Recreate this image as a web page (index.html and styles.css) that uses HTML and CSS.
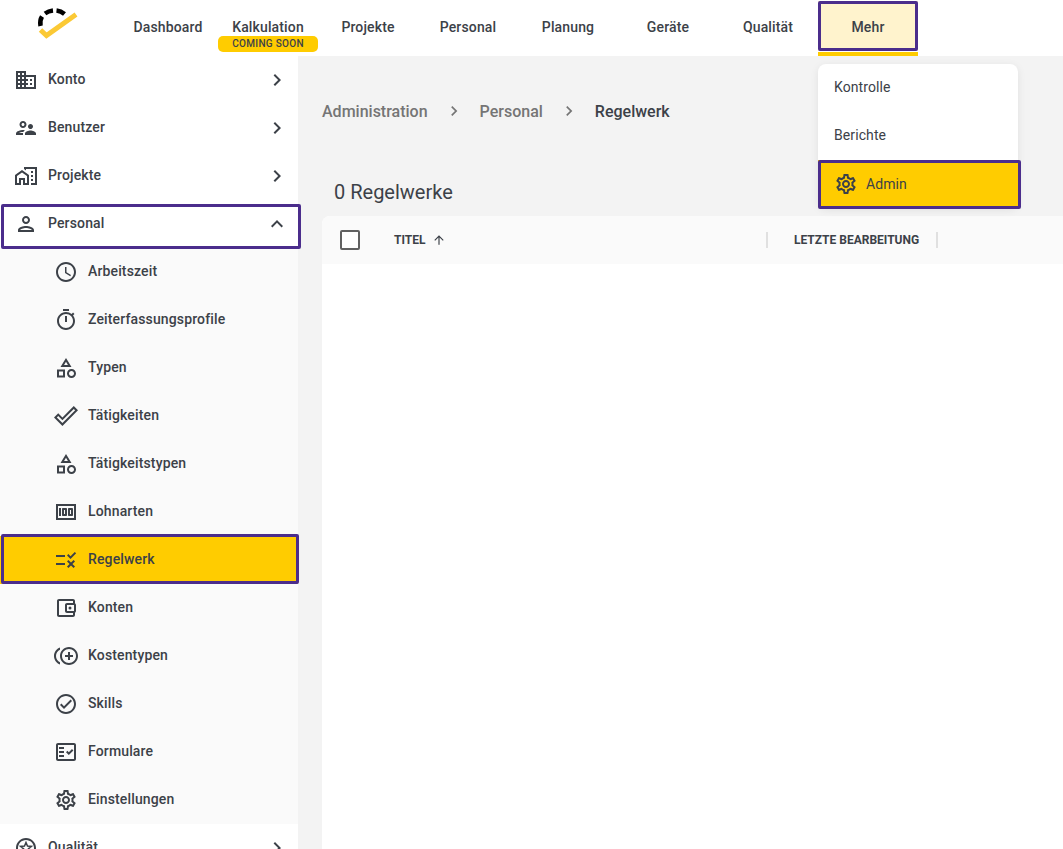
FILE: index.html
```html
<html lang="de">
<head>
    <meta charset="utf-8">
    <title>Regelwerk</title>
    <link rel="stylesheet" href="styles.css">
</head>
<body>
    <svg class="icon-defs" width="0" height="0">
        <symbol id="i-right" viewBox="0 0 24 24"><path d="M10 6L8.59 7.41 13.17 12l-4.58 4.59L10 18l6-6z"/></symbol>
        <symbol id="i-up" viewBox="0 0 24 24"><path d="M12 8l-6 6 1.41 1.41L12 10.83l4.59 4.58L18 14z"/></symbol>
        <symbol id="i-category" viewBox="0 0 24 24"><path d="M12 2l-5.5 9h11L12 2zm0 3.84L13.93 9h-3.87L12 5.84zM17.5 13c-2.49 0-4.5 2.01-4.5 4.5s2.01 4.5 4.5 4.5 4.5-2.01 4.5-4.5-2.01-4.5-4.5-4.5zm0 7c-1.38 0-2.5-1.12-2.5-2.5s1.12-2.5 2.5-2.5 2.5 1.12 2.5 2.5-1.12 2.5-2.5 2.5zM3 21.5h8v-8H3v8zm2-6h4v4H5v-4z"/></symbol>
        <symbol id="i-settings" viewBox="0 0 24 24"><path d="M19.43 12.98c.04-.32.07-.64.07-.98 0-.34-.03-.66-.07-.98l2.11-1.65c.19-.15.24-.42.12-.64l-2-3.46c-.09-.16-.26-.25-.44-.25-.06 0-.12.01-.17.03l-2.49 1c-.52-.4-1.08-.73-1.69-.98l-.38-2.65C14.46 2.18 14.25 2 14 2h-4c-.25 0-.46.18-.49.42l-.38 2.65c-.61.25-1.17.59-1.69.98l-2.49-1c-.06-.02-.12-.03-.18-.03-.17 0-.34.09-.43.25l-2 3.46c-.13.22-.07.49.12.64l2.11 1.65c-.04.32-.07.65-.07.98 0 .33.03.66.07.98l-2.11 1.65c-.19.15-.24.42-.12.64l2 3.46c.09.16.26.25.44.25.06 0 .12-.01.17-.03l2.49-1c.52.4 1.08.73 1.69.98l.38 2.65c.03.24.24.42.49.42h4c.25 0 .46-.18.49-.42l.38-2.65c.61-.25 1.17-.59 1.69-.98l2.49 1c.06.02.12.03.18.03.17 0 .34-.09.43-.25l2-3.46c.12-.22.07-.49-.12-.64l-2.11-1.65zm-1.98-1.71c.04.31.05.52.05.73 0 .21-.02.43-.05.73l-.14 1.13.89.7 1.08.84-.7 1.21-1.27-.51-1.04-.42-.9.68c-.43.32-.84.56-1.25.73l-1.06.43-.16 1.13-.2 1.35h-1.4l-.19-1.35-.16-1.13-1.06-.43c-.43-.18-.83-.41-1.23-.71l-.91-.7-1.06.43-1.27.51-.7-1.21 1.08-.84.89-.7-.14-1.13c-.03-.31-.05-.54-.05-.74s.02-.43.05-.73l.14-1.13-.89-.7-1.08-.84.7-1.21 1.27.51 1.04.42.9-.68c.43-.32.84-.56 1.25-.73l1.06-.43.16-1.13.2-1.35h1.39l.19 1.35.16 1.13 1.06.43c.43.18.83.41 1.23.71l.91.7 1.06-.43 1.27-.51.7 1.21-1.07.85-.89.7.14 1.13zM12 8c-2.21 0-4 1.79-4 4s1.79 4 4 4 4-1.79 4-4-1.79-4-4-4zm0 6c-1.1 0-2-.9-2-2s.9-2 2-2 2 .9 2 2-.9 2-2 2z"/></symbol>
    </svg>

    <div class="app">
        <header class="topbar">
            <div class="logo">
                <svg width="118" height="56" viewBox="0 0 118 56">
                    <path class="logo-arc" d="M40.500 26Q39.500 20.500 42 16.500M45 13.500Q48.500 11 53 10.500M56.500 10.500Q61 11 64.500 14"/>
                    <path class="logo-check" d="M40.500 30L46.500 35.500L76 14.500"/>
                </svg>
            </div>
            <nav class="nav">
                <a class="nav-item">Dashboard</a>
                <a class="nav-item">Kalkulation<span class="soon">COMING SOON</span></a>
                <a class="nav-item">Projekte</a>
                <a class="nav-item">Personal</a>
                <a class="nav-item">Planung</a>
                <a class="nav-item">Geräte</a>
                <a class="nav-item">Qualität</a>
                <a class="nav-item nav-more">Mehr</a>
            </nav>
        </header>

        <div class="body">
            <aside class="sidebar">
                <a class="side-row">
                    <svg class="icon" viewBox="0 0 24 24"><path d="M12 7V3H2v18h20V7H12zM6 19H4v-2h2v2zm0-4H4v-2h2v2zm0-4H4V9h2v2zm0-4H4V5h2v2zm4 12H8v-2h2v2zm0-4H8v-2h2v2zm0-4H8V9h2v2zm0-4H8V5h2v2zm10 12h-8v-2h2v-2h-2v-2h2v-2h-2V9h8v10zm-2-8h-2v2h2v-2zm0 4h-2v2h2v-2z"/></svg>
                    <span class="side-label">Konto</span>
                    <svg class="icon"><use href="#i-right"/></svg>
                </a>
                <a class="side-row">
                    <svg class="icon" viewBox="0 0 24 24"><path d="M9 12c1.930 0 3.500-1.570 3.500-3.500S10.930 5 9 5 5.500 6.570 5.500 8.500 7.070 12 9 12zm0-5c.83 0 1.500.67 1.500 1.500S9.830 10 9 10s-1.500-.67-1.500-1.500S8.170 7 9 7zm.05 10H4.770c.99-.5 2.700-1 4.230-1 .11 0 .23.01.34.01.34-.73.93-1.330 1.640-1.810-.73-.13-1.420-.2-1.980-.2-2.340 0-7 1.170-7 3.500V19h7v-1.500c0-.17.02-.34.05-.5zm7.450-2.500c-1.840 0-5.500 1.010-5.500 3V19h11v-1.500c0-1.990-3.660-3-5.500-3zm1.210-1.820c.76-.43 1.290-1.240 1.290-2.180C19 9.120 17.880 8 16.500 8S14 9.120 14 10.500c0 .94.53 1.750 1.290 2.180.36.2.77.32 1.210.32s.85-.12 1.210-.32z"/></svg>
                    <span class="side-label">Benutzer</span>
                    <svg class="icon"><use href="#i-right"/></svg>
                </a>
                <a class="side-row">
                    <svg class="icon" viewBox="0 0 24 24"><path d="M1 11v10h6v-5h2v5h6V11L8 6l-7 5zm12 8h-2v-5H5v5H3v-7l5-3.500 5 3.500v7zm4-12h2v2h-2zm0 4h2v2h-2zm0 4h2v2h-2zM10 3v1.970l2 1.430V5h9v14h-4v2h6V3z"/></svg>
                    <span class="side-label">Projekte</span>
                    <svg class="icon"><use href="#i-right"/></svg>
                </a>
                <a class="side-row marked marked-personal">
                    <svg class="icon" viewBox="0 0 24 24"><path d="M12 6c1.100 0 2 .9 2 2s-.9 2-2 2-2-.9-2-2 .9-2 2-2m0 10c2.700 0 5.800 1.290 6 2H6c.23-.72 3.310-2 6-2m0-12C9.790 4 8 5.790 8 8s1.790 4 4 4 4-1.790 4-4-1.790-4-4-4zm0 10c-2.670 0-8 1.340-8 4v2h16v-2c0-2.660-5.330-4-8-4z"/></svg>
                    <span class="side-label">Personal</span>
                    <svg class="icon"><use href="#i-up"/></svg>
                </a>

                <div class="submenu">
                    <a class="sub-row">
                        <svg class="icon" viewBox="0 0 24 24"><path d="M11.990 2C6.470 2 2 6.480 2 12s4.470 10 9.990 10C17.520 22 22 17.520 22 12S17.520 2 11.990 2zM12 20c-4.420 0-8-3.580-8-8s3.580-8 8-8 8 3.580 8 8-3.580 8-8 8zm.5-13H11v6l5.250 3.150.75-1.230-4.500-2.670z"/></svg>
                        <span class="side-label">Arbeitszeit</span>
                    </a>
                    <a class="sub-row">
                        <svg class="icon" viewBox="0 0 24 24"><path d="M15 1H9v2h6V1zm-4 13h2V8h-2v6zm8.030-6.610l1.420-1.420c-.43-.51-.9-.99-1.410-1.410l-1.420 1.420C16.070 4.740 14.120 4 12 4c-4.970 0-9 4.030-9 9s4.020 9 9 9 9-4.030 9-9c0-2.120-.74-4.070-1.970-5.610zM12 20c-3.870 0-7-3.130-7-7s3.130-7 7-7 7 3.130 7 7-3.130 7-7 7z"/></svg>
                        <span class="side-label">Zeiterfassungsprofile</span>
                    </a>
                    <a class="sub-row">
                        <svg class="icon"><use href="#i-category"/></svg>
                        <span class="side-label">Typen</span>
                    </a>
                    <a class="sub-row">
                        <svg class="icon" viewBox="0 0 24 24"><path d="M19.770 4.930l1.400 1.400L8.430 19.070l-5.600-5.600 1.400-1.400 4.200 4.200L19.770 4.930m0-2.830L8.430 13.440l-4.200-4.200L0 13.470l8.430 8.430L24 6.330 19.770 2.100z"/></svg>
                        <span class="side-label">Tätigkeiten</span>
                    </a>
                    <a class="sub-row">
                        <svg class="icon"><use href="#i-category"/></svg>
                        <span class="side-label">Tätigkeitstypen</span>
                    </a>
                    <a class="sub-row">
                        <svg class="icon" viewBox="0 0 24 24"><path d="M5 8h2v8H5zm7 0H9c-.55 0-1 .45-1 1v6c0 .55.45 1 1 1h3c.55 0 1-.45 1-1V9c0-.55-.45-1-1-1zm-1 6h-1v-4h1v4zm7-6h-3c-.55 0-1 .45-1 1v6c0 .55.45 1 1 1h3c.55 0 1-.45 1-1V9c0-.55-.45-1-1-1zm-1 6h-1v-4h1v4zM2 4v16h20V4H2zm2 14V6h16v12H4z"/></svg>
                        <span class="side-label">Lohnarten</span>
                    </a>
                    <a class="sub-row sub-active marked marked-regelwerk">
                        <svg class="icon" viewBox="0 0 24 24"><path d="M16.540 11L13 7.460l1.410-1.410 2.120 2.120 4.240-4.240 1.410 1.410L16.540 11zM11 7H2v2h9V7zm10 6.410L19.590 12 17 14.590 14.410 12 13 13.410 15.590 16 13 18.590 14.410 20 17 17.410 19.590 20 21 18.590 18.410 16 21 13.410zM11 15H2v2h9v-2z"/></svg>
                        <span class="side-label">Regelwerk</span>
                    </a>
                    <a class="sub-row">
                        <svg class="icon" viewBox="0 0 24 24"><path d="M21 7.280V5c0-1.100-.9-2-2-2H5c-1.110 0-2 .9-2 2v14c0 1.100.89 2 2 2h14c1.100 0 2-.9 2-2v-2.280c.59-.35 1-.98 1-1.720V9c0-.74-.41-1.370-1-1.720zM20 9v6h-7V9h7zM5 19V5h14v2h-6c-1.100 0-2 .9-2 2v6c0 1.100.9 2 2 2h6v2H5z"/><circle cx="16" cy="12" r="1.500"/></svg>
                        <span class="side-label">Konten</span>
                    </a>
                    <a class="sub-row">
                        <svg class="icon" viewBox="0 0 24 24"><path d="M16 8h-2v3h-3v2h3v3h2v-3h3v-2h-3zM2 12c0-2.790 1.640-5.200 4.010-6.320V3.520C2.520 4.760 0 8.090 0 12s2.520 7.240 6.010 8.480v-2.160C3.640 17.200 2 14.790 2 12zm13-9c-4.960 0-9 4.040-9 9s4.040 9 9 9 9-4.040 9-9-4.040-9-9-9zm0 16c-3.860 0-7-3.140-7-7s3.140-7 7-7 7 3.140 7 7-3.140 7-7 7z"/></svg>
                        <span class="side-label">Kostentypen</span>
                    </a>
                    <a class="sub-row">
                        <svg class="icon" viewBox="0 0 24 24"><path d="M12 2C6.480 2 2 6.480 2 12s4.480 10 10 10 10-4.480 10-10S17.520 2 12 2zm0 18c-4.410 0-8-3.590-8-8s3.590-8 8-8 8 3.590 8 8-3.590 8-8 8zm4.590-12.420L10 14.170l-2.590-2.580L6 13l4 4 8-8z"/></svg>
                        <span class="side-label">Skills</span>
                    </a>
                    <a class="sub-row">
                        <svg class="icon" viewBox="0 0 24 24"><path d="M20 3H4c-1.100 0-2 .9-2 2v14c0 1.100.9 2 2 2h16c1.100 0 2-.9 2-2V5c0-1.100-.9-2-2-2zm0 16H4V5h16v14zM19.410 10.420l-1.420-1.420-3.170 3.170-1.410-1.420L12 12.160 14.820 15zM5 7h5v2H5zm0 4h5v2H5zm0 4h5v2H5z"/></svg>
                        <span class="side-label">Formulare</span>
                    </a>
                    <a class="sub-row">
                        <svg class="icon"><use href="#i-settings"/></svg>
                        <span class="side-label">Einstellungen</span>
                    </a>
                </div>

                <a class="side-row">
                    <svg class="icon" viewBox="0 0 24 24"><path d="M12 2C6.480 2 2 6.480 2 12s4.480 10 10 10 10-4.480 10-10S17.520 2 12 2zm0 18c-4.410 0-8-3.590-8-8s3.590-8 8-8 8 3.590 8 8-3.590 8-8 8z"/><path d="M12 6.500l1.500 3.600 3.900.3-3 2.500.9 3.800-3.300-2-3.300 2 .9-3.800-3-2.500 3.900-.3z" class="star"/></svg>
                    <span class="side-label">Qualität</span>
                    <svg class="icon"><use href="#i-right"/></svg>
                </a>
            </aside>

            <main class="content">
                <div class="crumbs">
                    <span class="crumb">Administration</span>
                    <svg class="crumb-sep"><use href="#i-right"/></svg>
                    <span class="crumb">Personal</span>
                    <svg class="crumb-sep"><use href="#i-right"/></svg>
                    <span class="crumb crumb-current">Regelwerk</span>
                </div>

                <h1 class="count">0 Regelwerke</h1>

                <div class="table">
                    <div class="table-head">
                        <span class="checkbox"></span>
                        <div class="col col-title">
                            <span>TITEL</span>
                            <svg class="sort" viewBox="0 0 24 24"><path d="M4 12l1.410 1.410L11 7.830V20h2V7.830l5.580 5.590L20 12l-8-8-8 8z"/></svg>
                        </div>
                        <div class="col col-edit">LETZTE BEARBEITUNG</div>
                    </div>
                </div>
            </main>
        </div>

        <div class="menu">
            <a class="menu-item">Kontrolle</a>
            <a class="menu-item">Berichte</a>
            <a class="menu-item menu-active marked marked-admin">
                <svg class="icon"><use href="#i-settings"/></svg>
                Admin
            </a>
        </div>
    </div>
</body>
</html>
```

FILE: styles.css
```css
html, body {
    margin: 0;
    padding: 0;
}

body {
    font-family: Roboto, "Liberation Sans", sans-serif;
    font-size: 14px;
    color: #3c4148;
    background: #fff;
}

.icon-defs {
    position: absolute;
}

.app {
    position: relative;
    display: flex;
    flex-direction: column;
    height: 100vh;
    overflow: hidden;
}

.icon {
    width: 24px;
    height: 24px;
    flex: none;
    fill: #3c4148;
}

/* top bar */
.topbar {
    display: flex;
    flex: none;
    height: 56px;
    background: #fff;
}

.logo {
    width: 118px;
    flex: none;
}

.logo svg {
    display: block;
}

.logo-arc {
    fill: none;
    stroke: #000;
    stroke-width: 4.500;
}

.logo-check {
    fill: none;
    stroke: #fbc935;
    stroke-width: 5;
}

.nav {
    display: flex;
}

.nav-item {
    position: relative;
    display: flex;
    align-items: center;
    justify-content: center;
    width: 100px;
    height: 54px;
    padding-bottom: 2px;
    font-weight: 500;
    letter-spacing: 0.14px;
}

.soon {
    position: absolute;
    left: 0;
    top: 36px;
    width: 100px;
    height: 16px;
    border-radius: 5px;
    background: #ffcc00;
    font-size: 10px;
    line-height: 16px;
    letter-spacing: 0.3px;
    text-align: center;
}

.nav-more {
    height: 51px;
    padding-bottom: 0;
    padding-top: 1px;
    background: linear-gradient(#fff3cd, #fff3cd) no-repeat 0 1px / 100% 50px;
    border-bottom: 4px solid #ffcc00;
}

.nav-more::after {
    content: "";
    position: absolute;
    left: 0;
    right: 0;
    top: 1px;
    height: 50px;
    box-sizing: border-box;
    border: 3px solid #4b2d8c;
    border-radius: 2px;
}

/* annotation frame over a row */
.marked {
    position: relative;
}

.marked::after {
    content: "";
    position: absolute;
    box-sizing: border-box;
    border: 3px solid #4b2d8c;
    border-radius: 2px;
}

.marked-personal::after {
    left: 1px;
    right: -3px;
    top: 4px;
    bottom: -1px;
}

.marked-regelwerk::after {
    left: 1px;
    right: -1px;
    top: -2px;
    bottom: 0;
}

.marked-admin::after {
    left: 0;
    right: -3px;
    top: 0;
    bottom: -1px;
}

/* sidebar */
.body {
    display: flex;
    flex: 1;
    min-height: 0;
}

.sidebar {
    position: relative;
    z-index: 1;
    width: 298px;
    flex: none;
    background: #fff;
}

.side-row,
.sub-row {
    display: flex;
    align-items: center;
    gap: 10px;
    height: 48px;
    box-sizing: border-box;
    font-weight: 500;
    letter-spacing: 0.14px;
}

.side-row {
    padding: 0 9px 0 14px;
}

.sub-row {
    padding: 0 9px 0 54px;
}

.side-label {
    flex: 1;
    position: relative;
    top: -1px;
}

.submenu {
    background: #fafafa;
}

.sub-active {
    background: #ffcc00;
}

.star {
    fill: none;
    stroke: #3c4148;
    stroke-width: 1.500;
}

/* main area */
.content {
    display: flex;
    flex-direction: column;
    flex: 1;
    min-width: 0;
    padding-left: 24px;
    background: #f3f3f3;
}

.crumbs {
    display: flex;
    flex: none;
    align-items: center;
    gap: 16px;
    height: 20px;
    margin-top: 45px;
    font-size: 16px;
    font-weight: 500;
    color: #757575;
}

.crumb-sep {
    width: 20px;
    height: 20px;
    fill: #757575;
}

.crumb-current {
    color: #3c4148;
}

.count {
    flex: none;
    margin: 59px 0 0 12px;
    height: 24px;
    font-size: 20px;
    line-height: 24px;
    font-weight: 400;
    color: #3c4148;
}

.table {
    flex: 1;
    margin-top: 12px;
    background: #fff;
    border-top-left-radius: 8px;
}

.table-head {
    display: flex;
    align-items: center;
    height: 48px;
    background: #fafafa;
    border-top-left-radius: 8px;
    font-size: 12px;
    font-weight: 700;
}

.checkbox {
    width: 20px;
    height: 20px;
    box-sizing: border-box;
    flex: none;
    margin: 0 34px 0 18px;
    background: #fff;
    border: 2px solid #616161;
    border-radius: 2px;
}

.col {
    display: flex;
    align-items: center;
    height: 16px;
}

.col-title {
    gap: 7px;
    width: 372px;
    border-right: 2px solid #e0e0e0;
}

.col-edit {
    margin-left: 26px;
    padding-right: 17px;
    border-right: 2px solid #e0e0e0;
}

.sort {
    width: 14px;
    height: 14px;
    fill: #3c4148;
}

/* Mehr dropdown */
.menu {
    position: absolute;
    z-index: 2;
    left: 818px;
    top: 64px;
    width: 200px;
    background: #fff;
    border-radius: 8px;
    box-shadow: 0 2px 8px rgba(0, 0, 0, 0.08);
    letter-spacing: 0.1px;
}

.menu-item {
    display: flex;
    align-items: center;
    gap: 8px;
    height: 48px;
    padding-left: 16px;
    box-sizing: border-box;
    padding-bottom: 2px;
}

.menu-active {
    background: #ffcc00;
    padding-bottom: 0;
    border-radius: 0 0 2px 2px;
}
```
